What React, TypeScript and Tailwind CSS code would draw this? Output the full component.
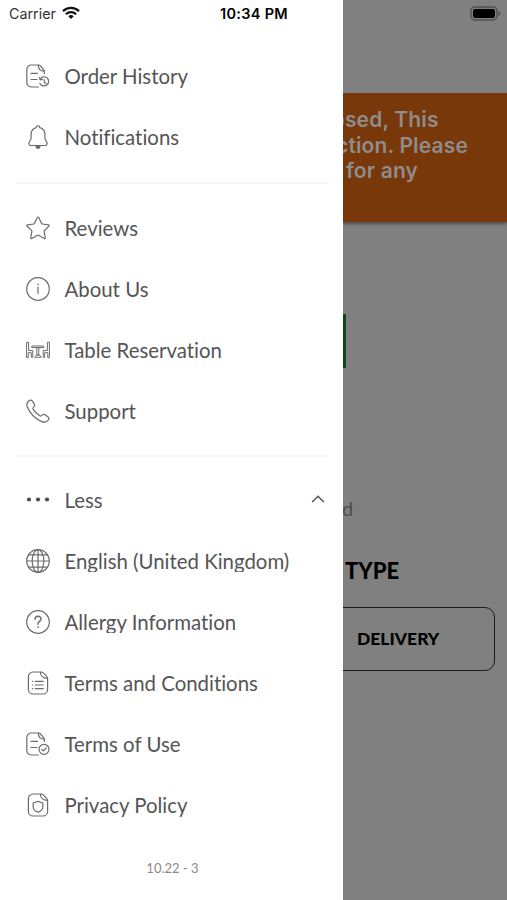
import React from 'react';
import { clsx } from 'clsx';

type MenuItem = {
  label: string;
  icon: React.ReactNode;
  trimmed?: boolean;
  expanded?: boolean;
};

function Icon({ children }: { children: React.ReactNode }) {
  return (
    <svg
      viewBox="0 0 24 24"
      className="mb-[2px] h-6 w-6 shrink-0"
      fill="none"
      stroke="#6c6c6c"
      strokeWidth="1.2"
      strokeLinecap="round"
      strokeLinejoin="round"
    >
      {children}
    </svg>
  );
}

// page outline with the folded corner, shared by the two centred document icons
function Sheet() {
  return (
    <>
      <path d="M14.800 1H7a4.600 4.600 0 0 0-4.600 4.600v12.800A4.600 4.600 0 0 0 7 23h10a4.600 4.600 0 0 0 4.600-4.600V7.800c0-1-.3-1.800-1-2.500l-3-3.200c-.7-.8-1.700-1.100-2.800-1.100z" />
      <path d="M14.400 1.300c.1 3.500 2.800 6 6.900 6" />
    </>
  );
}

// page outline left open at the bottom right for a round badge
function OpenSheet() {
  return (
    <>
      <path d="M12.500 23H5.300A4.500 4.500 0 0 1 .8 18.500v-13A4.500 4.500 0 0 1 5.300 1h6.900c1 0 1.700.3 2.300 1l3.200 3.800c.5.600.7 1.200.7 2v1.800" />
      <path d="M12.300 1.200c-.2 3.600 2 6 5.900 6M5 9.300h6.500M5 15.500h6" />
    </>
  );
}

const mainItems: MenuItem[] = [
  {
    label: 'Order History',
    icon: (
      <Icon>
        <OpenSheet />
        <path d="M14.200 14.800a4.600 4.600 0 1 1-.3 4.600M13.300 13.600l.8 2.200 2.300-.4M18.200 15.600v2.700l1.800 1.300" />
      </Icon>
    ),
  },
  {
    label: 'Notifications',
    icon: (
      <Icon>
        <path d="M10.300 2.600a1.700 1.700 0 1 1 3.400 0c3.400.9 5.200 3.400 5.200 6.700v3.200c0 1.900.6 3 1.600 4.100 1.100 1.300.7 3.900-1.200 3.900H4.700c-1.900 0-2.300-2.600-1.200-3.900 1-1.100 1.600-2.200 1.600-4.100V9.300c0-3.300 1.800-5.800 5.200-6.700z" />
        <path d="M10 21.400h4c-.1 1.100-.9 1.900-2 1.900s-1.900-.8-2-1.900z" fill="#666666" />
      </Icon>
    ),
  },
];

const infoItems: MenuItem[] = [
  {
    label: 'Reviews',
    icon: (
      <Icon>
        <path d="M11.300 1.500c.3-.6 1.100-.6 1.400 0l2.900 6.100c.1.200.3.400.6.400l6.300.9c.7.100.9.800.4 1.300l-4.600 4.500c-.2.200-.3.400-.2.700l1.200 6.400c.1.600-.5 1.100-1.100.8l-5.700-3.300c-.3-.2-.7-.2-1 0l-5.700 3.300c-.6.300-1.200-.2-1.100-.8l1.200-6.400c.1-.3 0-.5-.2-.7L1.100 10.200c-.5-.5-.3-1.200.4-1.300L7.800 8c.3 0 .5-.2.6-.4z" />
      </Icon>
    ),
  },
  {
    label: 'About Us',
    icon: (
      <Icon>
        <circle cx="12" cy="12" r="11.300" />
        <path d="M12 10v6.500" />
        <path d="M12 7.300v.2" strokeWidth="1.500" />
      </Icon>
    ),
  },
  {
    label: 'Table Reservation',
    icon: (
      <Icon>
        <g strokeWidth="1">
          <path d="M.6 19.300V4.300h2v8.200h4.200v6.800H5.300v-4.600H2.200v4.600z" />
          <path d="M23.400 19.300V4.300h-2v8.200h-4.200v6.800h1.500v-4.600h3.100v4.600z" />
          <path d="M6.200 8h11.600v1.600H6.200zM11.200 9.600h1.600v7.600h-1.600zM8.900 18.900c.2-1.100 1-1.700 2.300-1.700h1.600c1.300 0 2.100.6 2.300 1.700z" />
        </g>
      </Icon>
    ),
  },
  {
    label: 'Support',
    trimmed: true,
    icon: (
      <Icon>
        <path d="M2.200 2.500C3.600.9 5.200.5 6.200 1.900l2.100 3c.8 1.200.5 2.200-.5 3-1 .8-1.100 1.700-.4 2.700 1.500 2.400 3.500 4.400 5.900 6 1 .7 1.900.6 2.800-.4.8-1 1.900-1.200 3-.4l3 2.100c1.400 1 1 2.500-.6 4-1.500 1.400-3.600 1.500-5.600.7C9 19.900 4 14.700 1.300 8.100.5 6.100.8 4 2.200 2.500z" />
      </Icon>
    ),
  },
];

const moreItems: MenuItem[] = [
  {
    label: 'Less',
    expanded: true,
    icon: (
      <Icon>
        <g fill="#4b4b4b" stroke="none">
          <circle cx="3" cy="11.500" r="2.100" />
          <circle cx="12" cy="11.500" r="2.100" />
          <circle cx="21" cy="11.500" r="2.100" />
        </g>
      </Icon>
    ),
  },
  {
    label: 'English (United Kingdom)',
    trimmed: true,
    icon: (
      <Icon>
        <circle cx="12" cy="12" r="11.300" />
        <ellipse cx="12" cy="12" rx="5.800" ry="11.300" />
        <path d="M12 .7v22.600M.7 12h22.600M2.700 5.800h18.600M2.700 18.200h18.600" />
      </Icon>
    ),
  },
  {
    label: 'Allergy Information',
    trimmed: true,
    icon: (
      <Icon>
        <circle cx="12" cy="12" r="11.300" />
        <path d="M9 9.200c0-1.800 1.300-2.900 3-2.900s3 1.100 3 2.800c0 2.200-3 2.300-3 4.600v.5" strokeWidth="1.400" />
        <path d="M12 17v.2" strokeWidth="1.700" />
      </Icon>
    ),
  },
  {
    label: 'Terms and Conditions',
    icon: (
      <Icon>
        <Sheet />
        <path d="M9.200 10.300h8M9.200 14h8M9.200 17.700h8M6.400 10.300h.3M6.400 14h.3M6.400 17.700h.3" />
      </Icon>
    ),
  },
  {
    label: 'Terms of Use',
    icon: (
      <Icon>
        <OpenSheet />
        <circle cx="18" cy="17.300" r="5" />
        <path d="M15.900 17.500l1.400 1.400 2.900-2.900" />
      </Icon>
    ),
  },
  {
    label: 'Privacy Policy',
    icon: (
      <Icon>
        <Sheet />
        <path d="M12 8.300c1.500 1 3 1.400 4.800 1.500v4.300c0 2.300-1.800 4.100-4.800 5.200-3-1.100-4.800-2.900-4.800-5.200V9.800C9 9.700 10.500 9.300 12 8.300z" />
      </Icon>
    ),
  },
];

function MenuRow({ item }: { item: MenuItem }) {
  return (
    <li className="flex h-[61px] items-center pr-[18px] pl-[25.5px]">
      {item.icon}
      <span
        className={clsx(
          'ml-[15px] flex-1 whitespace-nowrap text-[20.4px] leading-[26px] [font-variant-ligatures:none]',
          item.trimmed ? 'mb-1 h-6 overflow-hidden' : 'mb-0.5'
        )}
      >
        {item.label}
      </span>
      {item.expanded && (
        <svg viewBox="0 0 14 8" className="mb-[3px] h-2 w-3.5" fill="none" stroke="#555555" strokeWidth="1.500">
          <path d="M1.200 7L7 1.300 12.800 7" />
        </svg>
      )}
    </li>
  );
}

function Divider() {
  return <div className="mr-[14px] ml-4 h-0.5 bg-[#f5f5f5]" />;
}

function StatusBar() {
  return (
    <div className="flex h-[27px] items-center pl-[9px] font-['Inter',sans-serif] text-black">
      <span className="w-[53px] text-[14.3px] text-[#333333]">Carrier</span>
      <svg viewBox="0 0 18 13" className="mb-0.5 h-[13px] w-[18px]" fill="none" stroke="#111111" strokeWidth="2.300">
        <path d="M1 5.100a11.500 11.500 0 0 1 16 0M3.900 8.200a7.300 7.300 0 0 1 10.200 0" />
        <path d="M9 13l-2.700-2.800a3.900 3.900 0 0 1 5.400 0z" fill="#111111" stroke="none" />
      </svg>
      <span className="ml-[140px] whitespace-nowrap text-[14.5px] font-semibold tracking-[0.3px]">10:34 PM</span>
    </div>
  );
}

function Drawer() {
  return (
    <aside className="flex h-full w-[343px] shrink-0 flex-col bg-white font-['Lato',sans-serif] text-[#555555]">
      <StatusBar />
      <ul className="mt-[19px]">
        {mainItems.map((item) => (
          <MenuRow key={item.label} item={item} />
        ))}
      </ul>
      <div className="mt-[14px] mb-[14px]">
        <Divider />
      </div>
      <ul>
        {infoItems.map((item) => (
          <MenuRow key={item.label} item={item} />
        ))}
      </ul>
      <div className="mt-[13px] mb-[13px]">
        <Divider />
      </div>
      <ul>
        {moreItems.map((item) => (
          <MenuRow key={item.label} item={item} />
        ))}
      </ul>
      <p className="mt-[22px] pl-[2px] text-center text-[13px] leading-5 text-[#8a8a8a]">10.22 - 3</p>
    </aside>
  );
}

function DimmedPage() {
  return (
    <main className="flex h-full min-w-0 flex-1 flex-col overflow-hidden bg-[#808080] font-['Lato',sans-serif] whitespace-nowrap">
      <div className="flex h-[27px] items-center justify-end pr-[6px]">
        <svg viewBox="0 0 31 15" className="h-[15px] w-[31px]">
          <rect x="1" y="1" width="26" height="13" rx="4" fill="#808080" stroke="#4f4f4f" strokeWidth="1.400" />
          <rect x="3" y="3" width="22" height="9" rx="2.200" fill="#000000" />
          <path d="M28.500 5.200v4.600c1-.3 1.700-1.200 1.700-2.300s-.7-2-1.700-2.300z" fill="#4f4f4f" />
        </svg>
      </div>
      <div className="mt-[66px] h-[129px] bg-[#78380a] pt-[14px] font-['Inter',sans-serif] text-[21px] leading-[25.500px] font-semibold tracking-[0.150px] text-[#8f8c8a] shadow-[0_2px_3px_rgba(0,0,0,0.4)]">
        <p className="-ml-[11px]">osed, This</p>
        <p className="-ml-[7px]">ction. Please</p>
        <p className="ml-[3px]">for any</p>
      </div>
      <div className="mt-[92px] h-[54px] w-[3px] bg-[#0f4a12]" />
      <p className="mt-[127px] -ml-px text-[20px] leading-[26px] text-[#4d4d4d]">d</p>
      <h2 className="mt-[35px] pl-[2px] text-[22px] leading-[30px] font-black text-black">TYPE</h2>
      <div className="mt-[21px] mr-[12px] -ml-3 flex h-[64px] items-center rounded-[10px] border-[1.500px] border-[#1c1c1c] pl-[25px]">
        <span className="text-[17.500px] font-black text-black">DELIVERY</span>
      </div>
    </main>
  );
}

export default function App() {
  return (
    <div className="flex h-[900px] w-[507px] overflow-hidden">
      <Drawer />
      <DimmedPage />
    </div>
  );
}
